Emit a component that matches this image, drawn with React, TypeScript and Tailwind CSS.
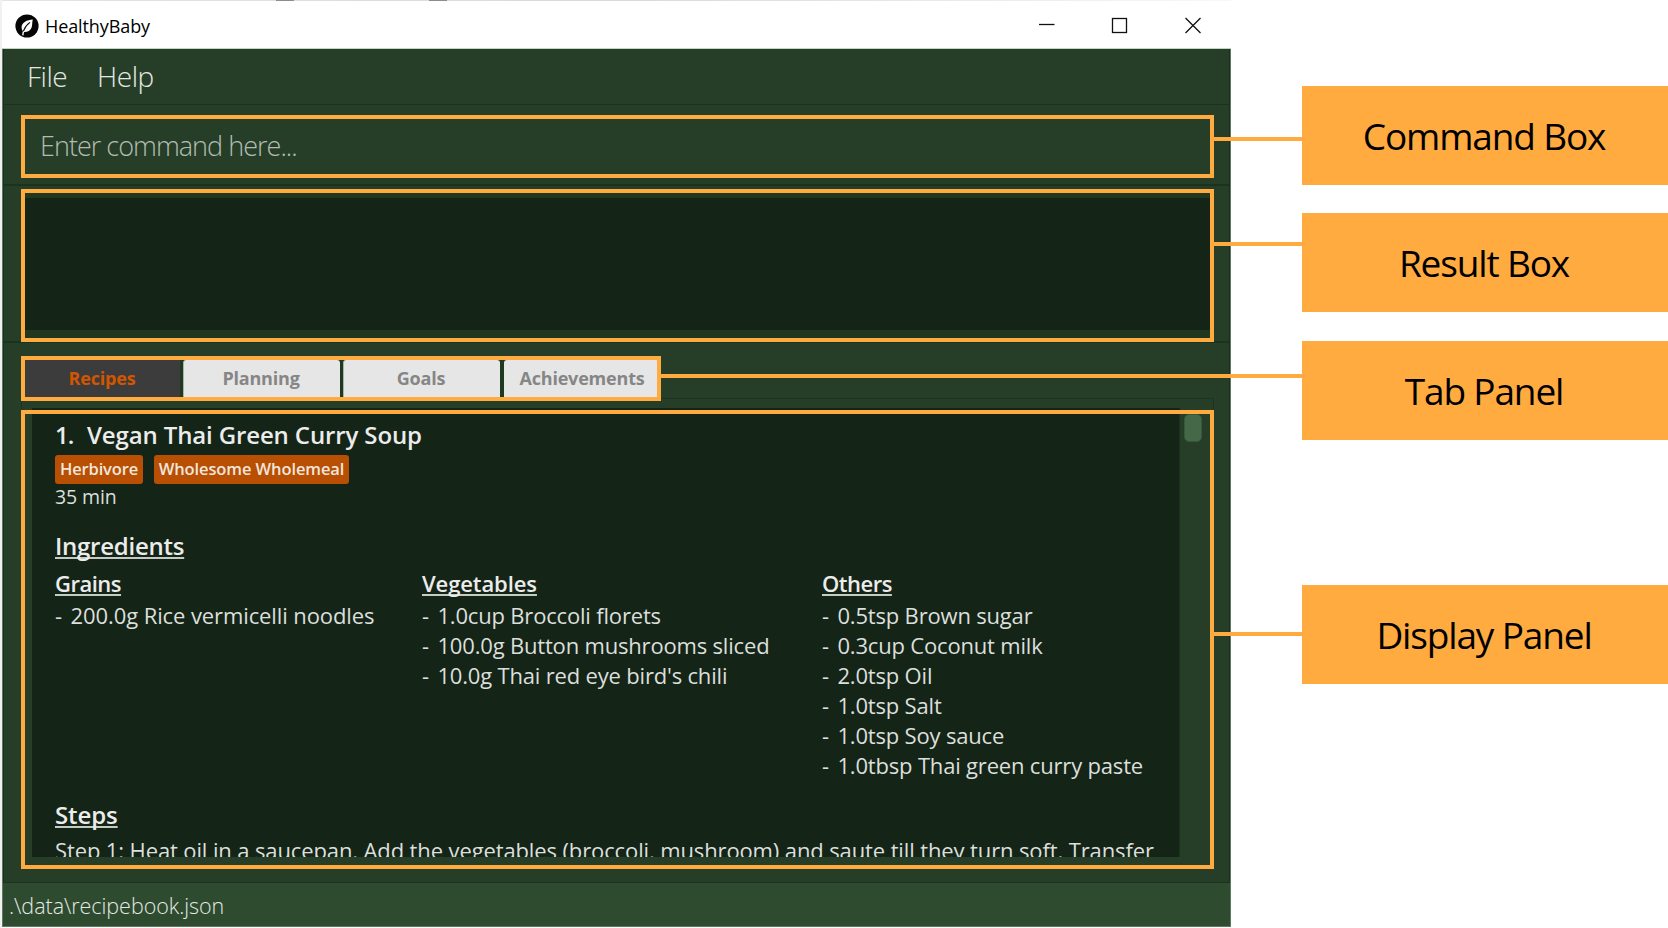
import type { ReactNode } from "react";

const tabs = ["Planning", "Goals"];

const ingredients = [
  {
    name: "Grains",
    width: "w-[367px]",
    tracking: "tracking-[-0.5px]",
    itemTracking: "tracking-[-0.1px]",
    items: ["200.0g Rice vermicelli noodles"],
  },
  {
    name: "Vegetables",
    width: "w-[400px]",
    tracking: "tracking-[-0.1px]",
    itemTracking: "tracking-[-0.18px]",
    items: ["1.0cup Broccoli florets", "100.0g Button mushrooms sliced", "10.0g Thai red eye bird's chili"],
  },
  {
    name: "Others",
    width: "w-[340px]",
    tracking: "tracking-[-0.5px]",
    itemTracking: "tracking-[-0.18px]",
    items: [
      "0.5tsp Brown sugar",
      "0.3cup Coconut milk",
      "2.0tsp Oil",
      "1.0tsp Salt",
      "1.0tsp Soy sauce",
      "1.0tbsp Thai green curry paste",
    ],
  },
];

const callouts = [
  { label: "Command Box", gap: "mt-[86px]", line: "top-[51px] w-[88px]" },
  { label: "Result Box", gap: "mt-7", line: "top-[29px] w-[88px]" },
  { label: "Tab Panel", gap: "mt-[29px]", line: "top-[33px] w-[641px]" },
  { label: "Display Panel", gap: "mt-[145px]", line: "top-[47px] w-[88px]" },
];

function Heading({ className, children }: { className: string; children: ReactNode }) {
  return (
    <div
      className={`font-semibold text-[#ececec] underline decoration-[#c3cbc4] decoration-[1.5px] underline-offset-[2px] [text-decoration-skip-ink:none] ${className}`}
    >
      {children}
    </div>
  );
}

function LeafIcon() {
  return (
    <svg width="24" height="24" viewBox="0 0 24 24">
      <circle cx="12" cy="12" r="11.6" fill="#050505" />
      <path
        d="M17.8 5.4C12 5.8 6.8 8.3 6.6 12.8c-.1 2 .5 3.4 1.3 4.5-.4 1.2-.7 2.4-.8 3.9l1.4.3c.1-1.3.3-2.4.7-3.4 3.600-.2 6.300-1.600 7.400-4.700.9-2.600.4-5.600 1.200-8z"
        fill="#fff"
      />
      <path d="M8.3 17.2C9.6 13.6 11.8 10.6 15 8.4" fill="none" stroke="#111" strokeWidth="1.1" />
    </svg>
  );
}

function TitleBar() {
  return (
    <header className="flex h-[49px] shrink-0 flex-col border-b border-[#c5d3c7] bg-white">
      <div className="flex h-px bg-linear-to-r from-[#e4e4e4] via-[#d9d9d9] to-[#f8f8f8]">
        <div className="ml-[274px] w-[18px] bg-[#8d8d8d]" />
        <div className="ml-[135px] w-[18px] bg-[#8d8d8d]" />
      </div>
      <div className="flex grow items-center pl-[13px] pt-0.5">
        <LeafIcon />
        <span className="ml-1.5 text-[18px] leading-6 tracking-[-0.1px] text-black">HealthyBaby</span>
        <svg
          className="ml-auto mr-[28px]"
          width="164"
          height="18"
          viewBox="0 0 164 18"
          fill="none"
          stroke="#111"
          strokeWidth="1.3"
        >
          <path d="M0 7.5H15.5" />
          <rect x="73.5" y="1.5" width="14" height="14" />
          <path d="M146.5 1L161.5 16M161.5 1L146.5 16" />
        </svg>
      </div>
    </header>
  );
}

function RecipeList() {
  return (
    <div className="ml-[7px] h-[443px] w-[1148px] shrink-0 overflow-hidden border-r border-[#1b321e] bg-[#142517] pl-[23px] pt-1 text-[22px] tracking-[-0.12px] text-[#dcdfdc]">
      <div className="flex h-[34px] items-center text-[24px] font-semibold tracking-[-0.13px] text-[#ececec]">
        <span className="w-8 tracking-[-1px]">1.</span>
        <span>Vegan Thai Green Curry Soup</span>
      </div>
      <div className="mt-[3px] flex gap-[11px] text-[16.5px] font-semibold text-[#f0e6dc]">
        <span className="flex h-[29px] w-[88px] items-center justify-center rounded-[3px] bg-[#b84f03] tracking-[-0.15px]">
          Herbivore
        </span>
        <span className="flex h-[29px] w-[195px] items-center justify-center rounded-[3px] bg-[#b84f03] tracking-[-0.1px]">
          Wholesome Wholemeal
        </span>
      </div>
      <div className="h-[25px] text-[19.5px] leading-[25px]">35 min</div>
      <Heading className="mt-[19px] text-[24px] leading-9 tracking-[-0.25px]">Ingredients</Heading>
      <div className="mt-1 flex h-[212px]">
        {ingredients.map((group) => (
          <div key={group.name} className={`shrink-0 whitespace-nowrap ${group.width}`}>
            <Heading className={`mb-0.5 leading-[30px] ${group.tracking}`}>{group.name}</Heading>
            {group.items.map((item) => (
              <div key={item} className={`leading-[30px] ${group.itemTracking}`}>
                <span className="mr-[3px]">- </span>
                {item}
              </div>
            ))}
          </div>
        ))}
      </div>
      <Heading className="mt-[17px] text-[24px] leading-9 tracking-[-0.1px]">Steps</Heading>
      <div className="mt-0.5 whitespace-nowrap leading-[30px]">
        Step 1: Heat oil in a saucepan. Add the vegetables (broccoli, mushroom) and saute till they turn soft. Transfer
      </div>
    </div>
  );
}

export default function App() {
  return (
    <div className="flex h-[928px] w-[1668px] overflow-hidden bg-white font-['Open_Sans','Noto_Sans',sans-serif]">
      <div className="w-0.5 shrink-0 bg-[#f1f1f1]" />
      <div className="flex h-[927px] w-[1229px] shrink-0 flex-col">
        <TitleBar />
        <div className="flex grow flex-col border-x border-b border-[#5f7a63] bg-[#263e27]">
          <div className="flex grow flex-col border-x border-[#1a301c]">
            <nav className="flex h-[55px] items-center gap-[30px] pb-0.5 pl-[23px] text-[28px] font-light tracking-[-0.5px] text-[#e3e8e3]">
              <span>File</span>
              <span>Help</span>
            </nav>
            <section className="h-20 border-t border-[#1b321e] pl-[17px] pr-[15px] pt-2.5">
              <div className="flex h-[63px] items-center border-4 border-[#ffab40] pb-px pl-[15px] text-[27px] font-light tracking-[-0.98px] text-[#b3bcb3]">
                Enter command here...
              </div>
            </section>
            <section className="h-[159px] border-y-2 border-[#1b321e] pl-[17px] pr-[15px] pt-[3px]">
              <div className="relative h-[153px] border-4 border-[#ffab40] bg-[#21381f] pb-2 pt-[5px]">
                <div className="h-full bg-[#142517]" />
              </div>
            </section>
            <section className="flex flex-col pl-[17px] pr-[15px] pt-[13px]">
              <div className="relative z-10 flex h-[45px] w-[640px] items-stretch border-4 border-[#ffab40] bg-[#203a21] text-[18px] font-bold tracking-[-0.2px]">
                <div className="flex w-[155px] items-center justify-center bg-[#3c3c3c] pr-px text-[#d25600]">
                  Recipes
                </div>
                {tabs.map((tab) => (
                  <div
                    key={tab}
                    className="ml-[3px] flex w-[157px] items-center justify-center rounded-t-[3px] border-l border-[#a9b3aa] bg-[#e6e6e6] pr-0.5 text-[#868686]"
                  >
                    {tab}
                  </div>
                ))}
                <div className="ml-1 flex grow items-center justify-center rounded-tl-[3px] bg-[#e6e6e6] pl-[3px] text-[#868686]">
                  Achievements
                </div>
              </div>
              <div className="-mt-[3px] flex flex-col">
                <div className="h-3 border-x border-t border-[#1d351f] pl-2.5 pt-[9px]">
                  <div className="h-0.5 w-[1148px] bg-[#142517]" />
                </div>
                <div className="flex h-[459px] border-4 border-[#ffab40]">
                  <RecipeList />
                  <div className="ml-1 h-7 w-[18px] rounded-[5px] border border-[#36593a] bg-[#446848]" />
                </div>
              </div>
            </section>
            <div className="grow" />
          </div>
          <footer className="flex h-11 items-center border-t border-[#1b321e] bg-[#2e4b30] pl-1.5 pt-1 text-[21.5px] font-light tracking-[-0.04px] text-[#e4eae4]">
            .\data\recipebook.json
          </footer>
        </div>
      </div>
      <aside className="ml-[71px] flex w-[366px] flex-col">
        {callouts.map((callout) => (
          <div
            key={callout.label}
            className={`relative flex h-[99px] shrink-0 items-center justify-center bg-[#ffab40] pr-0.5 text-[37px] tracking-[-1.15px] text-black ${callout.gap}`}
          >
            <span className={`absolute right-full h-1 bg-[#ffab40] ${callout.line}`} />
            {callout.label}
          </div>
        ))}
      </aside>
    </div>
  );
}
